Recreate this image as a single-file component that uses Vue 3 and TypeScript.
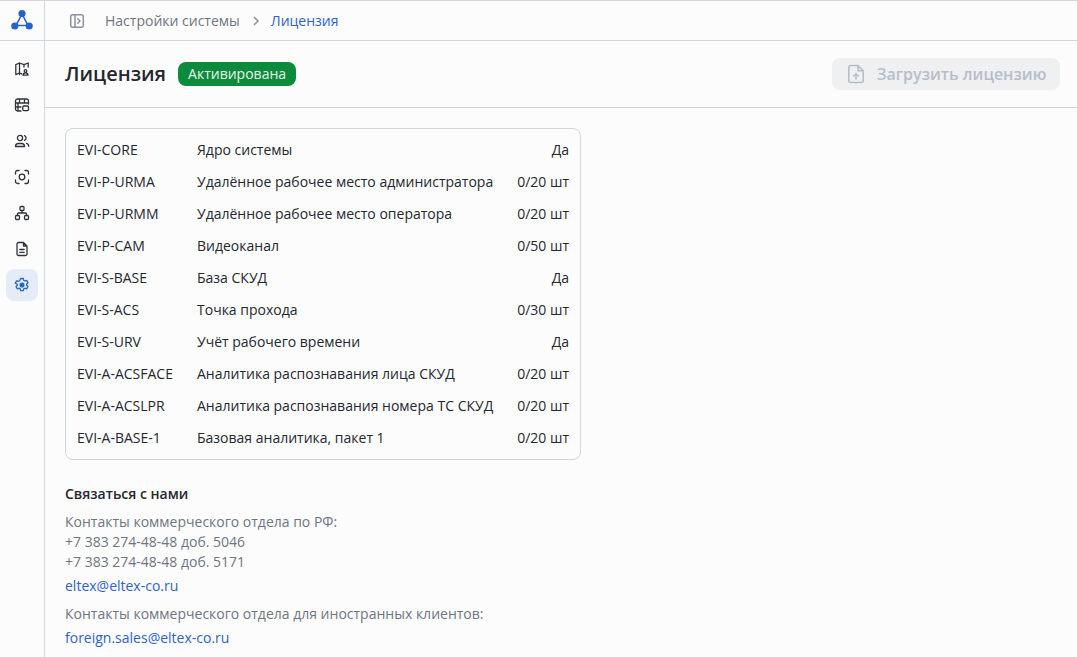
<script setup lang="ts">
const rows: [string, string, string][] = [
  ['EVI-CORE', 'Ядро системы', 'Да'],
  ['EVI-P-URMA', 'Удалённое рабочее место администратора', '0/20 шт'],
  ['EVI-P-URMM', 'Удалённое рабочее место оператора', '0/20 шт'],
  ['EVI-P-CAM', 'Видеоканал', '0/50 шт'],
  ['EVI-S-BASE', 'База СКУД', 'Да'],
  ['EVI-S-ACS', 'Точка прохода', '0/30 шт'],
  ['EVI-S-URV', 'Учёт рабочего времени', 'Да'],
  ['EVI-A-ACSFACE', 'Аналитика распознавания лица СКУД', '0/20 шт'],
  ['EVI-A-ACSLPR', 'Аналитика распознавания номера ТС СКУД', '0/20 шт'],
  ['EVI-A-BASE-1', 'Базовая аналитика, пакет 1', '0/20 шт'],
]
</script>

<template>
  <div class="app">
    <aside class="side">
      <div class="logo">
        <svg width="24" height="24" viewBox="0 0 24 24">
          <path d="M12 6 L6 17.500 H18 Z" fill="none" stroke="#2563c9" stroke-width="1.600" />
          <circle cx="12" cy="5.500" r="3.600" fill="#2563c9" />
          <circle cx="4.800" cy="18" r="3.600" fill="#2563c9" />
          <circle cx="19.200" cy="18" r="3.600" fill="#2563c9" />
        </svg>
      </div>
      <nav class="nav">
        <div class="item">
          <svg class="ic" viewBox="0 0 16 16"><path d="M1.800 3.600 5.500 2l4.500 1.600L14.200 2v4M5.500 2v11.500M10 3.600V6M1.800 3.600v10L5.500 12l2.200.9" /><circle cx="11.500" cy="10" r="1.300" /><path d="M9 14.200c0-3 5-3 5 0z" /></svg>
        </div>
        <div class="item">
          <svg class="ic" viewBox="0 0 16 16"><path d="M7 14H3.500A2 2 0 0 1 1.500 12V4a2 2 0 0 1 2-2h9a2 2 0 0 1 2 2v3M1.500 6h13M1.500 10H7M5.500 2v4M10.500 2v4M4 6v8" /><rect x="8.800" y="9" width="5.700" height="4.600" rx="1" /></svg>
        </div>
        <div class="item">
          <svg class="ic" viewBox="0 0 16 16"><circle cx="6" cy="5" r="2.600" /><path d="M1.500 13.500c0-1.800 1.200-3 3-3h3c1.800 0 3 1.200 3 3zM10.500 2.600a2.600 2.600 0 0 1 0 4.800M12.500 10.400c1.300.3 2.200 1.400 2.200 2.800" /></svg>
        </div>
        <div class="item">
          <svg class="ic" viewBox="0 0 16 16"><path d="M1.500 5V3.500a2 2 0 0 1 2-2H5M11 1.500h1.500a2 2 0 0 1 2 2V5M14.500 11v1.500a2 2 0 0 1-2 2H11M5 14.500H3.500a2 2 0 0 1-2-2V11" /><circle cx="8" cy="8" r="2.800" /></svg>
        </div>
        <div class="item">
          <svg class="ic" viewBox="0 0 16 16"><rect x="6" y="1.500" width="4" height="4" rx="1" /><rect x="1.500" y="10.500" width="4" height="4" rx="1" /><rect x="10.500" y="10.500" width="4" height="4" rx="1" /><path d="M8 5.500V8M3.500 10.500V9a1 1 0 0 1 1-1h7a1 1 0 0 1 1 1v1.500" /></svg>
        </div>
        <div class="item">
          <svg class="ic" viewBox="0 0 16 16"><path d="M9.500 1.500H4.500a1.500 1.500 0 0 0-1.500 1.500v10a1.500 1.500 0 0 0 1.500 1.500h7a1.500 1.500 0 0 0 1.500-1.500V5zM9.500 1.500V5H13M5.800 8.500h4.400M5.800 11.300h4.400" /></svg>
        </div>
        <div class="item active">
          <svg class="ic" viewBox="0 0 16 16"><path d="M6.700 1.500h2.600l.4 1.800 1.300.7 1.700-.6 1.300 2.300-1.300 1.200v1.400l1.300 1.200-1.300 2.300-1.700-.6-1.300.7-.4 1.800H6.700l-.4-1.800-1.300-.7-1.700.6-1.300-2.300 1.300-1.200V7.300L1.300 6.100l1.300-2.300 1.700.6 1.300-.7z" /><circle cx="8" cy="8" r="1.900" fill="#2563c9" /></svg>
        </div>
      </nav>
    </aside>

    <main class="main">
      <header class="crumbs">
        <svg class="toggle" width="16" height="16" viewBox="0 0 16 16"><rect x="1.700" y="1.700" width="12.600" height="12.600" rx="2" /><path d="M6 2v12M8.800 5.800 11 8l-2.200 2.200" /></svg>
        <span class="crumb">Настройки системы</span>
        <svg class="chev" width="10" height="10" viewBox="0 0 10 10"><path d="M3 1l4 4-4 4" /></svg>
        <span class="crumb current">Лицензия</span>
      </header>

      <section class="head">
        <div class="title">
          <h1>Лицензия</h1>
          <span class="badge">Активирована</span>
        </div>
        <button class="upload" disabled>
          <svg width="20" height="20" viewBox="0 0 20 20"><path d="M12 1.500H4.800a2 2 0 0 0-2 2v13a2 2 0 0 0 2 2h10.400a2 2 0 0 0 2-2V6.800zM12 1.500v5.300h5.200" /><path d="M10 15v-5M7.800 12 10 9.800l2.200 2.200" /></svg>
          <span>Загрузить лицензию</span>
        </button>
      </section>

      <section class="content">
        <div class="card">
          <div v-for="r in rows" :key="r[0]" class="row">
            <span class="code">{{ r[0] }}</span>
            <span class="name">{{ r[1] }}</span>
            <span class="val">{{ r[2] }}</span>
          </div>
        </div>

        <div class="contact">
          <h2>Связаться с нами</h2>
          <p class="muted first">Контакты коммерческого отдела по РФ:<br />+7 383 274-48-48 доб. 5046<br />+7 383 274-48-48 доб. 5171</p>
          <a class="link">eltex@eltex-co.ru</a>
          <p class="muted">Контакты коммерческого отдела для иностранных клиентов:</p>
          <a class="link">foreign.sales@eltex-co.ru</a>
        </div>
      </section>
    </main>
  </div>
</template>

<style>
html, body { margin: 0; height: 100%; overflow: hidden; background: #fcfcfd; }
</style>

<style scoped>
.app {
  display: flex;
  width: 1077px;
  height: 657px;
  box-sizing: border-box;
  border-top: 1px solid #d3d6dc;
  font-family: "Open Sans", sans-serif;
  font-size: 14px;
  line-height: 20px;
  color: #24272e;
  background: #fcfcfd;
  overflow: hidden;
}
.side {
  width: 45px;
  flex: none;
  box-sizing: border-box;
  border-right: 1px solid #d0d5dd;
  display: flex;
  flex-direction: column;
  align-items: center;
}
.logo {
  height: 39px;
  flex: none;
  width: 100%;
  box-sizing: content-box;
  border-bottom: 1px solid #d0d5dd;
  display: flex;
  align-items: center;
  justify-content: center;
}
.logo svg { margin-top: -1px; }
.nav {
  display: flex;
  flex-direction: column;
  gap: 4px;
  padding-top: 12px;
}
.item {
  width: 32px;
  height: 32px;
  border-radius: 8px;
  display: flex;
  align-items: center;
  justify-content: center;
  margin-left: -1px;
}
.ic {
  width: 16px;
  height: 16px;
  fill: none;
  stroke: #2f323a;
  stroke-width: 1.300;
  stroke-linecap: round;
  stroke-linejoin: round;
}
.item.active { background: #e6ecf7; }
.item.active .ic { stroke: #2563c9; }
.main { flex: 1; min-width: 0; display: flex; flex-direction: column; }
.crumbs {
  height: 39px;
  flex: none;
  box-sizing: content-box;
  border-bottom: 1px solid #d0d5dd;
  display: flex;
  align-items: center;
  padding-left: 24px;
}
.toggle {
  fill: none;
  stroke: #8b919c;
  stroke-width: 1.500;
  stroke-linecap: round;
  stroke-linejoin: round;
  margin-right: 20px;
}
.crumb { color: #6f7580; }
.crumb.current { color: #2f62c4; }
.chev {
  fill: none;
  stroke: #8b919c;
  stroke-width: 1.500;
  margin: 0 10px 0 11px;
}
.head {
  height: 66px;
  flex: none;
  box-sizing: content-box;
  border-bottom: 1px solid #d0d5dd;
  display: flex;
  align-items: center;
  justify-content: space-between;
  padding: 0 17px 0 20px;
}
.title { display: flex; align-items: center; gap: 12px; }
h1 {
  margin: 0;
  font-size: 20px;
  line-height: 28px;
  font-weight: 600;
  color: #24272e;
}
.badge {
  background: #0e8a3c;
  color: #e6f5ea;
  border-radius: 8px;
  height: 24px;
  line-height: 24px;
  padding: 0 10px;
  font-size: 14px;
}
.upload {
  width: 228px;
  height: 32px;
  border: 0;
  border-radius: 8px;
  background: #eff0f2;
  color: #b7bdc9;
  font: 600 16px/22px "Open Sans", sans-serif;
  display: flex;
  align-items: center;
  justify-content: center;
  gap: 11px;
  padding: 0;
}
.upload svg {
  fill: none;
  stroke: #b7bdc9;
  stroke-width: 1.600;
  stroke-linecap: round;
  stroke-linejoin: round;
}
.content { padding: 20px; }
.card {
  width: 516px;
  box-sizing: border-box;
  border: 1px solid #d0d5dd;
  border-radius: 8px;
  padding: 5px 11px;
}
.row { display: flex; height: 32px; align-items: center; }
.code { width: 120px; flex: none; }
.name { flex: 1; }
.val { flex: none; }
.contact { margin-top: 24px; }
h2 {
  margin: 0;
  font-size: 14px;
  line-height: 20px;
  font-weight: 600;
  color: #24272e;
}
p { margin: 0; }
.muted { color: #6f7580; margin-top: 6px; }
.muted.first { margin-top: 8px; }
.link { display: block; color: #2f62c4; margin-top: 4px; }
.link + .muted { margin-top: 8px; }
</style>
